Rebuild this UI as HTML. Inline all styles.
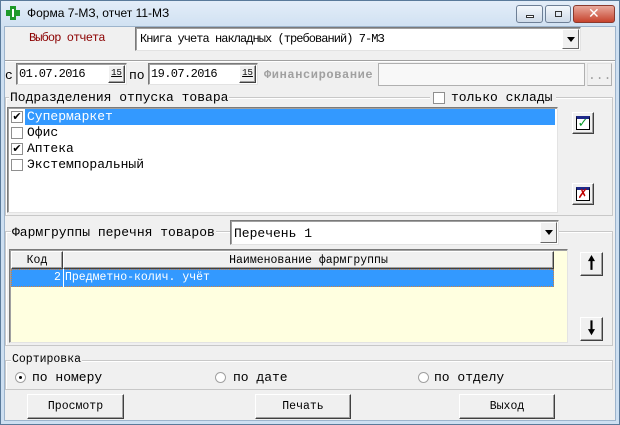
<!DOCTYPE html>
<html><head><meta charset="utf-8"><style>
*{box-sizing:border-box;margin:0;padding:0}
body{width:620px;height:425px;overflow:hidden;background:#f0f0f0;font-family:"Liberation Mono",monospace;font-size:13px;color:#000;position:relative}
.a{position:absolute}
#frame{left:0;top:0;width:620px;height:425px;border:1px solid #5a7a9a;background:linear-gradient(#e3edf8,#cddff1 30px);}
#client{left:4px;top:26px;width:612px;height:395px;background:#f0f0f0;border:1px solid #9db4cc}
.title{left:27px;top:6px;font-family:"Liberation Sans",sans-serif;font-size:12px;color:#000}
.tb{top:5px;height:18px;border:1px solid #6d7f96;border-radius:3px;background:linear-gradient(#f4f8fc,#cfdbe9)}
.in{background:#fff;border:1px solid #7a7a7a;border-right-color:#e3e3e3;border-bottom-color:#e3e3e3;box-shadow:inset 1px 1px 0 #a0a0a0}
.dd{width:17px;top:1px;bottom:1px;right:1px;background:#f0f0f0;border:1px solid;border-color:#fff #696969 #696969 #fff}
.dd:after{content:"";position:absolute;left:4px;top:7px;border:4px solid transparent;border-top:5px solid #000;border-bottom:0}
.grp{border:1px solid #c8c8c8;box-shadow:1px 1px 0 #fff inset}
.lbl{background:#f0f0f0;padding:0 1px}
.btn{border:1px solid;border-color:#fff #404040 #404040 #fff;box-shadow:inset -1px -1px 0 #a0a0a0;background:#f0f0f0;text-align:center;line-height:21px}
.cb{width:12px;height:12px;border:1px solid #8f8f8f;background:#fff;font-size:11px;line-height:10px;text-align:center;font-family:"DejaVu Sans",sans-serif}
.row{left:2px;height:16px;line-height:16px}
.rad{width:11px;height:11px;border-radius:50%;border:1px solid #a0a0a0;background:#fff}
.s{font-size:12px;letter-spacing:-0.6px}
</style></head><body>
<div id="frame" class="a"></div>
<div class="a" style="left:6px;top:6px;width:14px;height:14px">
<div class="a" style="left:4px;top:0;width:6px;height:14px;background:#1e9a2a"></div>
<div class="a" style="left:0;top:4px;width:14px;height:6px;background:#1e9a2a"></div>
<div class="a" style="left:6px;top:3px;width:2px;height:8px;background:#fff"></div></div>
<div class="a title">Форма 7-МЗ, отчет 11-МЗ</div>
<div class="a tb" style="left:516px;width:27px"><div class="a" style="left:9px;top:9px;width:8px;height:3px;border:1px solid #333;background:#fff"></div></div>
<div class="a tb" style="left:545px;width:26px"><div class="a" style="left:9px;top:5px;width:7px;height:6px;border:1px solid #333"></div></div>
<div class="a tb" style="left:573px;width:42px;background:linear-gradient(#e8a99c,#c7432d);border-color:#8a3a2e"><div class="a" style="left:14px;top:0;color:#fff;font:bold 14px 'DejaVu Sans',sans-serif">✕</div></div>
<div id="client" class="a"></div>

<div class="a" style="left:29px;top:31px;color:#8b0000;font-size:12px;letter-spacing:-0.9px">Выбор отчета</div>
<div class="a in" style="left:135px;top:27px;width:446px;height:24px"><div class="a" style="left:4px;top:4px;font-size:12px;letter-spacing:-0.95px">Книга учета накладных (требований) 7-МЗ</div><div class="a dd"></div></div>
<div class="a" style="left:5px;top:60px;width:610px;height:2px;border-top:1px solid #a0a0a0;border-bottom:1px solid #fff"></div>

<div class="a" style="left:5px;top:68px">с</div>
<div class="a in" style="left:16px;top:63px;width:111px;height:22px"><div class="a s" style="left:2px;top:3px">01.07.2016</div><div class="a btn" style="right:1px;top:1px;width:17px;height:18px;font-size:9px;line-height:14px;text-decoration:underline">15</div></div>
<div class="a" style="left:129px;top:68px">по</div>
<div class="a in" style="left:148px;top:63px;width:110px;height:22px"><div class="a s" style="left:2px;top:3px">19.07.2016</div><div class="a btn" style="right:1px;top:1px;width:17px;height:18px;font-size:9px;line-height:14px;text-decoration:underline">15</div></div>
<div class="a" style="left:264px;top:68px;color:#a0a0a0;font-weight:bold;font-size:12px;letter-spacing:0.6px">Финансирование</div>
<div class="a" style="left:378px;top:63px;width:207px;height:23px;border:1px solid #b0b0b0;background:#f8f8f8"></div>
<div class="a btn" style="left:587px;top:63px;width:25px;height:23px;color:#a0a0a0;line-height:24px;border-color:#e0e0e0 #b0b0b0 #b0b0b0 #e0e0e0;box-shadow:none">...</div>

<div class="a grp" style="left:5px;top:97px;width:608px;height:119px"></div>
<div class="a lbl" style="left:9px;top:90px">Подразделения отпуска товара</div>
<div class="a lbl" style="left:430px;top:91px;width:126px;height:14px"></div>
<div class="a cb" style="left:433px;top:92px"></div>
<div class="a" style="left:451px;top:90px">только склады</div>
<div class="a in" style="left:7px;top:107px;width:551px;height:106px">
<div class="a" style="left:17px;top:1px;width:530px;height:16px;background:#3399ff"></div>
<div class="a cb" style="left:3px;top:3px">✔</div><div class="a row" style="left:19px;top:1px;color:#fff">Супермаркет</div>
<div class="a cb" style="left:3px;top:19px"></div><div class="a row" style="left:19px;top:17px">Офис</div>
<div class="a cb" style="left:3px;top:35px">✔</div><div class="a row" style="left:19px;top:33px">Аптека</div>
<div class="a cb" style="left:3px;top:51px"></div><div class="a row" style="left:19px;top:49px">Экстемпоральный</div>
</div>
<div class="a btn" style="left:572px;top:112px;width:22px;height:22px"><div class="a" style="left:3px;top:3px;width:14px;height:14px;border:1px solid #000;border-top:3px solid #1e2a8a;background:#fff;color:#0a9a2a;font:bold 13px 'DejaVu Sans';line-height:10px">✓</div></div>
<div class="a btn" style="left:572px;top:183px;width:22px;height:22px"><div class="a" style="left:3px;top:3px;width:14px;height:14px;border:1px solid #000;border-top:3px solid #1e2a8a;background:#fff;color:#c00000;font:bold 13px 'DejaVu Sans';line-height:10px">✗</div></div>

<div class="a grp" style="left:5px;top:231px;width:608px;height:115px"></div>
<div class="a lbl" style="left:11px;top:225px">Фармгруппы перечня товаров</div>
<div class="a in" style="left:230px;top:220px;width:329px;height:25px"><div class="a" style="left:3px;top:5px">Перечень 1</div><div class="a dd"></div></div>
<div class="a in" style="left:9px;top:249px;width:559px;height:94px;background:#ffffe0">
<div class="a btn" style="left:1px;top:1px;width:52px;height:18px;line-height:17px;font-size:11.5px">Код</div>
<div class="a btn" style="left:53px;top:1px;width:491px;height:18px;line-height:17px;font-size:11.5px">Наименование фармгруппы</div>
<div class="a" style="left:1px;top:19px;width:543px;height:18px;background:#3399ff;border:1px dotted #d08040"></div>
<div class="a" style="left:44px;top:21px;color:#fff;font-size:11.5px">2</div>
<div class="a" style="left:53px;top:19px;width:1px;height:18px;background:#fff"></div>
<div class="a" style="left:55px;top:21px;color:#fff;font-size:11.5px">Предметно-колич. учёт</div>
</div>
<div class="a btn" style="left:580px;top:252px;width:23px;height:24px;font:bold 18px 'DejaVu Sans';line-height:22px">🠕</div>
<div class="a btn" style="left:580px;top:317px;width:23px;height:24px;font:bold 18px 'DejaVu Sans';line-height:22px">🠗</div>

<div class="a grp" style="left:5px;top:360px;width:608px;height:30px"></div>
<div class="a lbl" style="left:11px;top:353px;font-size:11.5px">Сортировка</div>
<div class="a rad" style="left:15px;top:372px"><div class="a" style="left:3px;top:3px;width:3px;height:3px;background:#000;border-radius:50%"></div></div>
<div class="a" style="left:32px;top:370px">по номеру</div>
<div class="a rad" style="left:215px;top:372px"></div>
<div class="a" style="left:233px;top:370px">по дате</div>
<div class="a rad" style="left:418px;top:372px"></div>
<div class="a" style="left:434px;top:370px">по отделу</div>

<div class="a btn" style="left:27px;top:394px;width:97px;height:25px;font-size:11.5px;line-height:23px">Просмотр</div>
<div class="a btn" style="left:255px;top:394px;width:96px;height:25px;font-size:11.5px;line-height:23px">Печать</div>
<div class="a btn" style="left:459px;top:394px;width:96px;height:25px;font-size:11.5px;line-height:23px">Выход</div>
</body></html>
